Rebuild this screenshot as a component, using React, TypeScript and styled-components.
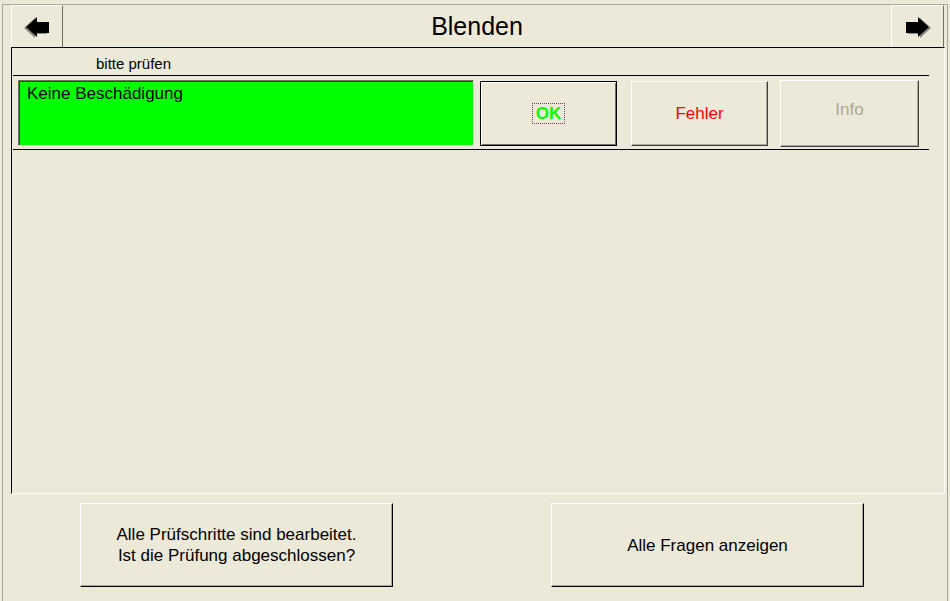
import styled, { createGlobalStyle } from "styled-components";

const GlobalStyle = createGlobalStyle`
  html, body {
    margin: 0;
    padding: 0;
    background: #ece9d8;
  }
  body {
    font-family: "Liberation Sans", Arial, sans-serif;
    color: #000;
  }
  #root {
    height: 601px;
    overflow: hidden;
  }
`;

type Variant = "default" | "normal" | "disabled";

const Arrow = ({ dir }: { dir: "left" | "right" }) => (
  <svg
    width="26"
    height="22"
    viewBox="0 0 26 22"
    style={dir === "right" ? { transform: "scaleX(-1)" } : undefined}
  >
    <polygon points="0,11 11,1 11,6 23,6 23,17 11,17 11,21" fill="#8a887e" />
    <polygon points="2,10 13,0 13,5 25,5 25,16 13,16 13,20" fill="#000" />
  </svg>
);

const App = () => {
  return (
    <>
      <GlobalStyle />
      <Frame>
        <Header>
          <NavButton>
            <Arrow dir="left" />
          </NavButton>
          <Title>Blenden</Title>
          <NavButton $right>
            <Arrow dir="right" />
          </NavButton>
        </Header>

        <Panel>
          <Label>bitte prüfen</Label>
          <CheckRow>
            <Status>Keine Beschädigung</Status>
            <ActionButton $variant="default" $width={137} $gap={6}>
              <Focus>OK</Focus>
            </ActionButton>
            <ActionButton $variant="normal" $width={137} $gap={14}>
              Fehler
            </ActionButton>
            <ActionButton $variant="disabled" $width={139} $gap={12}>
              Info
            </ActionButton>
          </CheckRow>
        </Panel>

        <Footer>
          <FooterButton>
            Alle Prüfschritte sind bearbeitet.
            <br />
            Ist die Prüfung abgeschlossen?
          </FooterButton>
          <FooterButton>Alle Fragen anzeigen</FooterButton>
        </Footer>
      </Frame>
    </>
  );
};

export default App;

const Frame = styled.div`
  box-sizing: border-box;
  margin: 4px 0 0 2px;
  width: 946px;
  height: 597px;
  border: 1px solid #aca899;
  border-bottom: none;
  display: flex;
  flex-direction: column;
`;

const Header = styled.div`
  display: flex;
  margin-left: 8px;
  width: 933px;
  height: 42px;
`;

const NavButton = styled.div<{ $right?: boolean }>`
  box-sizing: border-box;
  width: ${(p) => (p.$right ? 53 : 52)}px;
  height: 42px;
  display: flex;
  align-items: center;
  justify-content: center;
  padding-top: 2px;
  border-left: 1px solid #fff;
  border-top: 1px solid #fff;
  border-right: 1px solid #716f64;
`;

const Title = styled.div`
  flex: 1;
  display: flex;
  align-items: center;
  justify-content: center;
  font-size: 25px;
  padding-top: 1px;
`;

const Panel = styled.div`
  box-sizing: border-box;
  margin-left: 8px;
  width: 934px;
  height: 447px;
  border: 1px solid;
  border-color: #000 #fff #fff #000;
  display: flex;
  flex-direction: column;
`;

const Label = styled.div`
  box-sizing: border-box;
  height: 27px;
  padding: 3px 0 0 84px;
  display: flex;
  align-items: center;
  font-size: 15px;
`;

const CheckRow = styled.div`
  box-sizing: border-box;
  margin-left: 1px;
  width: 916px;
  height: 75px;
  border-top: 1px solid #000;
  border-bottom: 1px solid #000;
  padding: 4px 0 0 5px;
  display: flex;
  align-items: flex-start;
`;

const Status = styled.div`
  box-sizing: border-box;
  width: 456px;
  height: 66px;
  background: #00ff00;
  border: 1px solid;
  border-color: #716f64 #fff #fff #716f64;
  box-shadow: inset 1px 1px #404040;
  padding: 3px 8px;
  font-size: 17px;
`;

const ActionButton = styled.div<{ $variant: Variant; $width: number; $gap: number }>`
  box-sizing: border-box;
  width: ${(p) => p.$width}px;
  height: ${(p) => (p.$variant === "disabled" ? 67 : 65)}px;
  margin-top: ${(p) => (p.$variant === "disabled" ? 0 : 1)}px;
  margin-left: ${(p) => p.$gap}px;
  display: flex;
  align-items: center;
  justify-content: center;
  font-size: 17px;
  border: 1px solid;
  border-color: ${(p) =>
    p.$variant === "default" ? "#000" : "#fff #404040 #404040 #fff"};
  box-shadow: ${(p) =>
    p.$variant === "default"
      ? "inset 1px 1px #fff, inset -1px -1px #716f64"
      : "inset -1px -1px #aca899"};
  color: ${(p) =>
    p.$variant === "default"
      ? "#00ff00"
      : p.$variant === "normal"
      ? "#ff0000"
      : "#aca899"};
  font-weight: ${(p) => (p.$variant === "default" ? 700 : 400)};
  padding-bottom: ${(p) => (p.$variant === "disabled" ? 7 : 0)}px;
`;

const Focus = styled.span`
  border: 1px dotted #6b3b6b;
  padding: 0 3px;
  line-height: 19px;
`;

const Footer = styled.div`
  flex: 1;
  display: flex;
  gap: 158px;
  padding: 9px 0 0 77px;
`;

const FooterButton = styled.div`
  box-sizing: border-box;
  width: 313px;
  height: 84px;
  display: flex;
  align-items: center;
  justify-content: center;
  text-align: center;
  font-size: 17px;
  line-height: 21px;
  border: 1px solid;
  border-color: #fff #000 #000 #fff;
  box-shadow: inset -1px -1px #aca899;
`;
